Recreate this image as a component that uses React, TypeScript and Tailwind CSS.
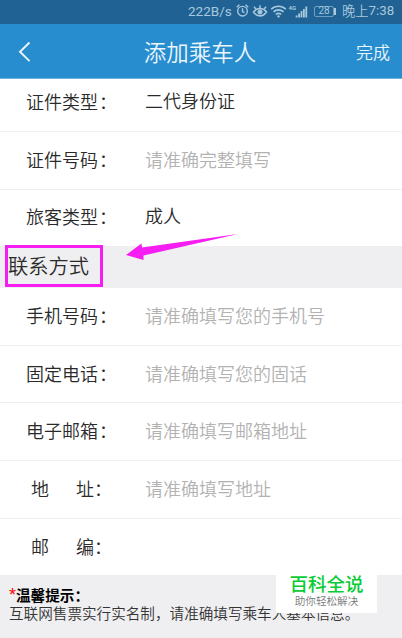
import React from "react";
import clsx from "clsx";

type FieldProps = {
  label: React.ReactNode;
  value?: string;
  placeholder?: string;
  className?: string;
  valueClassName?: string;
};

const Field = ({
  label,
  value,
  placeholder,
  className,
  valueClassName
}: FieldProps) => (
  <div
    className={clsx(
      "flex items-center pl-[26px] text-[18px] leading-[26px] whitespace-nowrap",
      className
    )}
  >
    <div className="flex w-[119px] shrink-0 text-[#2a2a2a]">
      {label}
      <span className="pl-[1px]">：</span>
    </div>
    <div
      className={clsx(value ? "text-[#2a2a2a]" : "text-[#b2b2b2]", valueClassName)}
    >
      {value ?? placeholder}
    </div>
  </div>
);

const SpacedLabel = ({ first, last }: { first: string; last: string }) => (
  <span className="-mr-[1px] flex gap-[27px] pl-[5px]">
    <span>{first}</span>
    <span>{last}</span>
  </span>
);

const StatusBar = () => (
  <div className="flex h-6 items-center bg-[#1f6293] pb-[2px] pl-[188px] text-[13.5px] leading-[22px] whitespace-nowrap text-[#a9c8de]">
    <span className="w-[48px] font-[Roboto] text-[13.5px] font-normal">222B/s</span>
    <svg
      width="84"
      height="18"
      viewBox="0 0 84 18"
      fill="none"
      stroke="currentColor"
      className="shrink-0"
    >
      {/* alarm */}
      <circle cx="6.5" cy="9.2" r="4.8" strokeWidth="1.4" />
      <path d="M6.5 6.2v3.300l2 1.200M.8 5.200l2.600-2.400M12.200 5.200L9.600 2.800" strokeWidth="1.4" />
      {/* eye */}
      <path d="M17.500 10c3.500-4.600 9.500-4.600 13 0-3.500 5.200-9.500 5.200-13 0z" strokeWidth="1.6" />
      <circle cx="24" cy="10" r="2.100" fill="currentColor" />
      <path d="M24 6.200V3.200M19.800 7l-1.800-2.400M28.200 7l1.800-2.400" strokeWidth="1.5" />
      {/* wifi */}
      <path d="M35.200 7.200c4-4 10.600-4 14.600 0M37.500 9.900c2.800-2.700 7.200-2.700 10 0M39.800 12.500c1.600-1.400 3.800-1.400 5.400 0" strokeWidth="1.6" />
      <circle cx="42.500" cy="14.400" r="1.200" fill="currentColor" stroke="none" />
      <text x="52.500" y="8" fontSize="6" fontWeight="700" fill="currentColor" stroke="none" className="font-[Roboto]">
        4G
      </text>
      {/* signal */}
      <path d="M60.600 15.500v-2M63.100 15.500v-4M65.500 15.500V9M67.900 15.500V7M70.300 15.500V4.500" strokeWidth="1.8" />
    </svg>
    <div className="-ml-[6px] flex items-center">
      <span className="flex h-[11px] w-[20px] items-center justify-center rounded-[2px] border border-[#6f9fc0] font-[Roboto] text-[10px] leading-none font-normal">
        28
      </span>
      <span className="h-[7px] w-[2px] bg-[#a9c8de]" />
    </div>
    <span className="ml-[6px] text-[13.3px]">晚上</span>
    <span className="font-[Roboto] text-[13.3px] font-normal">7:38</span>
  </div>
);

const Header = () => (
  <div className="relative flex h-[55px] items-center justify-center border-b border-[#6eb5e4] bg-[#288dcf] text-[#eaf5fc]">
    <svg
      width="13"
      height="22"
      viewBox="0 0 13 22"
      fill="none"
      stroke="currentColor"
      strokeWidth="1.9"
      className="absolute top-[17px] left-[18px]"
    >
      <path d="M11.500 1.500L2 10.700l9.500 9.400" />
    </svg>
    <h1 className="pt-[1px] pr-[2px] text-[22.5px] font-[350]">添加乘车人</h1>
    <span className="absolute top-[16px] right-[12px] text-[17px] leading-6">
      完成
    </span>
  </div>
);

const Watermark = () => (
  <div className="absolute top-[573px] left-[276px] flex h-[40px] w-[101px] flex-col items-center bg-white whitespace-nowrap">
    <span className="-mt-[1px] text-[18.5px] leading-[22px] font-medium text-[#08cc35]">
      百科全说
    </span>
    <span className="text-[10.6px] leading-[14px] text-[#777]">
      助你轻松解决
    </span>
  </div>
);

const App = () => {
  return (
    <main className="relative h-[638px] w-[402px] overflow-hidden bg-[#efeff1] font-['Noto_Sans_CJK_SC',sans-serif] font-[350]">
      <StatusBar />
      <Header />

      <div className="divide-y divide-[#f0f0f0] bg-white">
        <Field label="证件类型" value="二代身份证" className="h-[53px] pb-[8px]" valueClassName="-mt-[2px]" />
        <Field label="证件号码" placeholder="请准确完整填写" className="h-[58px] pb-[4px]" />
        <Field label="旅客类型" value="成人" className="h-[56px] pb-[4px]" valueClassName="-mt-[2px]" />
      </div>

      <div className="relative flex h-[42px] items-center pb-[4px] pl-2">
        <span className="text-[20.3px] leading-[28px] text-[#2a2a2a]">
          联系方式
        </span>
        <div className="absolute -top-[1px] left-[5px] h-[42px] w-[98px] border-3 border-[#f61df2]" />
        <svg
          width="114"
          height="28"
          viewBox="0 0 114 28"
          fill="#f61df2"
          className="absolute -top-[13px] left-[126px]"
        >
          <path d="M0 22L15.500 10.500L16 14.500L112 1L17.500 22.500L17.500 27z" />
        </svg>
      </div>

      <div className="divide-y divide-[#f0f0f0] bg-white">
        <Field label="手机号码" placeholder="请准确填写您的手机号" className="h-[58px] pb-[4px]" />
        <Field label="固定电话" placeholder="请准确填写您的固话" className="h-[57px] pb-[2px]" />
        <Field label="电子邮箱" placeholder="请准确填写邮箱地址" className="h-[58px] pb-[4px]" />
        <Field label={<SpacedLabel first="地" last="址" />} placeholder="请准确填写地址" className="h-[58px] pb-[4px]" />
        <Field label={<SpacedLabel first="邮" last="编" />} className="h-[56px] pb-[2px]" />
      </div>

      <div className="pt-[11px] pl-[9px] text-[14.6px] leading-[18px] whitespace-nowrap text-[#333]">
        <p className="flex font-bold text-black">
          <span className="w-[7px] font-['Liberation_Sans'] text-[18px] font-normal text-[#f00]">
            *
          </span>
          温馨提示：
        </p>
        <p>互联网售票实行实名制，请准确填写乘车人基本信息。</p>
      </div>

      <Watermark />
    </main>
  );
};

export default App;
